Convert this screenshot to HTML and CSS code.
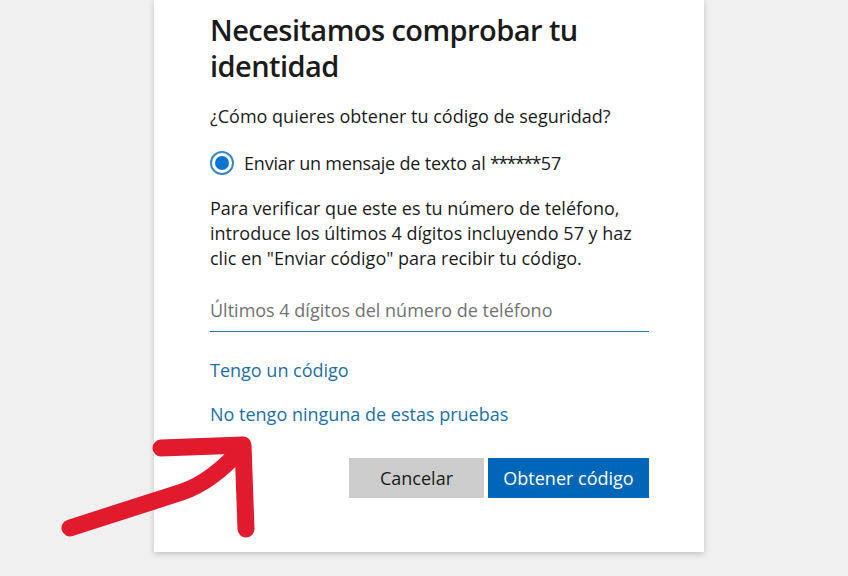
FILE: index.html
```html
<!DOCTYPE html>
<html lang="es">
<head>
<meta charset="utf-8">
<title>Necesitamos comprobar tu identidad</title>
<link rel="stylesheet" href="styles.css">
</head>
<body>
<div class="page">
  <main class="card">
    <h1 class="title">Necesitamos comprobar tu identidad</h1>
    <p class="question">¿Cómo quieres obtener tu código de seguridad?</p>
    <label class="option">
      <span class="radio"><span class="radio-dot"></span></span>
      <span class="option-text">Enviar un mensaje de texto al <span class="mask">******</span>57</span>
    </label>
    <p class="info">Para verificar que este es tu número de teléfono, introduce los últimos 4 dígitos incluyendo 57 y haz clic en "Enviar código" para recibir tu código.</p>
    <input class="field" type="text" placeholder="Últimos 4 dígitos del número de teléfono">
    <a class="link link-first" href="#">Tengo un código</a>
    <a class="link" href="#">No tengo ninguna de estas pruebas</a>
    <div class="actions">
      <button class="btn btn-secondary" type="button">Cancelar</button>
      <button class="btn btn-primary" type="button">Obtener código</button>
    </div>
  </main>
  <svg class="arrow" width="848" height="576" viewBox="0 0 848 576" aria-hidden="true">
    <path d="M70 528 L182 492 Q212 482 242 448" fill="none" stroke="#e11a2e" stroke-width="17" stroke-linecap="round" stroke-linejoin="round"/>
    <path d="M161 448 L243 445 L246 529" fill="none" stroke="#e11a2e" stroke-width="17" stroke-linecap="round" stroke-linejoin="round"/>
  </svg>
</div>
</body>
</html>
```

FILE: styles.css
```css
* { box-sizing: border-box; }

html, body {
  margin: 0;
  padding: 0;
  background: #f0f0f0;
  height: 100%;
  overflow: hidden;
}

body {
  font-family: "Open Sans", "Noto Sans", "Liberation Sans", sans-serif;
  color: #1b1b1b;
}

.page {
  position: relative;
  width: 848px;
  height: 576px;
}

.card {
  width: 550px;
  margin-left: 154px;
  background: #ffffff;
  padding: 12px 55px 54px 56px;
  box-shadow: 0 2px 6px rgba(0, 0, 0, 0.2);
  display: flex;
  flex-direction: column;
  align-items: flex-start;
}

.title {
  margin: 0;
  font-size: 29px;
  line-height: 36px;
  font-weight: 600;
  letter-spacing: -0.55px;
  width: 100%;
}

.question,
.info,
.option-text,
.link,
.field,
.btn {
  font-size: 18px;
  line-height: 25px;
  letter-spacing: 0;
}

.option-text {
  letter-spacing: -0.2px;
}

.mask {
  letter-spacing: -1.6px;
  margin-right: 1px;
}

.question {
  margin: 20px 0 0;
}

.option {
  display: flex;
  align-items: center;
  gap: 10px;
  margin-top: 22px;
  height: 24px;
}

.radio {
  width: 24px;
  height: 24px;
  border-radius: 50%;
  border: 2px solid #3d86c6;
  display: flex;
  align-items: center;
  justify-content: center;
  flex: none;
}

.radio-dot {
  width: 14px;
  height: 14px;
  border-radius: 50%;
  background: #0a74d0;
}

.info {
  margin: 21px 0 0;
}

.field {
  margin-top: 22px;
  width: 100%;
  height: 39px;
  border: none;
  border-bottom: 1px solid #1f78a3;
  padding: 0 0 5px;
  font-family: inherit;
  color: #1b1b1b;
  background: transparent;
  outline: none;
}

.field::placeholder {
  color: #737373;
}

.link {
  color: #1d6fa6;
  text-decoration: none;
  margin-top: 19px;
}

.link-first {
  margin-top: 26px;
}

.actions {
  align-self: flex-end;
  display: flex;
  gap: 4px;
  margin-top: 31px;
}

.btn {
  height: 40px;
  border: none;
  font-family: inherit;
  padding: 0 10px;
  cursor: pointer;
}

.btn-secondary {
  width: 135px;
  background: #cccccc;
  color: #1b1b1b;
}

.btn-primary {
  width: 161px;
  background: #0067b8;
  color: #ffffff;
}

.arrow {
  position: absolute;
  left: 0;
  top: 0;
  pointer-events: none;
}
```
